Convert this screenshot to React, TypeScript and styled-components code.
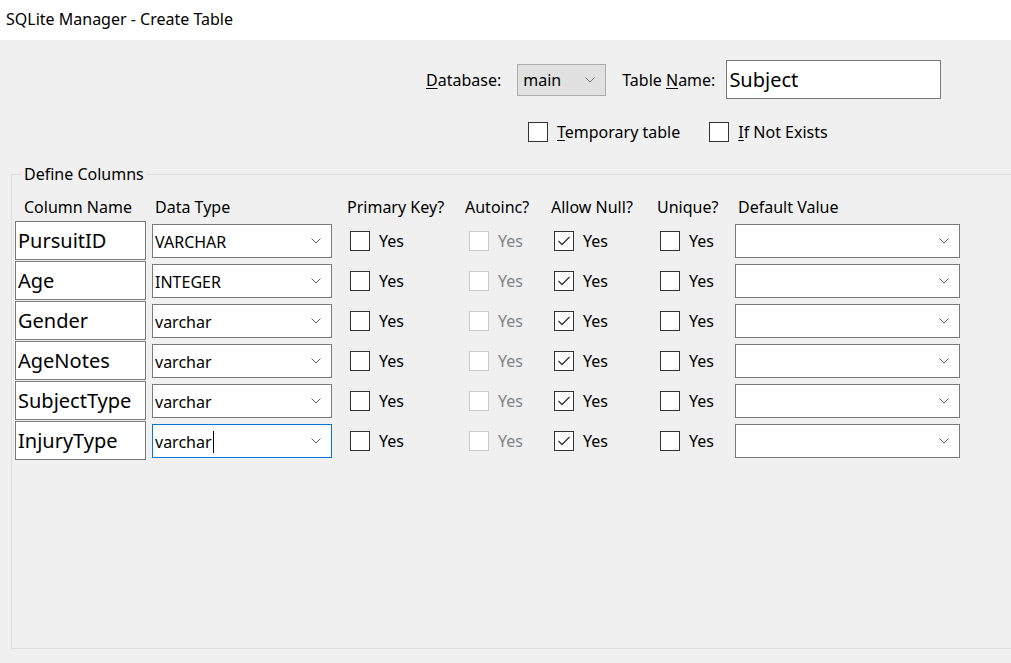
import styled, { createGlobalStyle } from "styled-components";

const GlobalStyle = createGlobalStyle`
  html, body {
    margin: 0;
    padding: 0;
    background: #f0f0f0;
  }
  body {
    font-family: "Noto Sans", "Open Sans", sans-serif;
    font-size: 16px;
    color: #000;
  }
`;

const Window = styled.div`
  width: 1011px;
  height: 663px;
  overflow: hidden;
  background: #f0f0f0;
`;

const TitleBar = styled.div`
  height: 40px;
  background: #fff;
  display: flex;
  align-items: center;
  padding-left: 6px;
  padding-bottom: 2px;
  box-sizing: border-box;
  font-size: 16px;
`;

const TopRow = styled.div`
  display: flex;
  align-items: center;
  margin-top: 20px;
  padding-left: 426px;
  height: 39px;
`;

const Label = styled.span<{ $gap?: number }>`
  white-space: nowrap;
  line-height: 20px;
  margin-left: ${(p) => p.$gap ?? 0}px;
`;

const Key = styled.span`
  text-decoration: underline;
  text-underline-offset: 2px;
`;

const Combo = styled.div<{ $w: number; $h: number; $flat?: boolean; $focus?: boolean; $gap?: number }>`
  box-sizing: border-box;
  width: ${(p) => p.$w}px;
  height: ${(p) => p.$h}px;
  margin-left: ${(p) => p.$gap ?? 0}px;
  display: flex;
  align-items: center;
  justify-content: space-between;
  padding: 0 10px 0 ${(p) => (p.$flat ? 5 : 2)}px;
  background: ${(p) => (p.$flat ? "#e1e1e1" : "#fff")};
  border: 1px solid ${(p) => (p.$focus ? "#0078d7" : p.$flat ? "#adadad" : "#7a7a7a")};
  font-size: 16px;
  white-space: nowrap;
`;

const ComboText = styled.span`
  display: flex;
  align-items: center;
  padding-top: 1px;
`;

const Caret = styled.span`
  display: inline-block;
  width: 1px;
  height: 22px;
  background: #000;
  margin-left: 1px;
`;

const TextBox = styled.div<{ $w: number; $h: number; $gap?: number }>`
  box-sizing: border-box;
  width: ${(p) => p.$w}px;
  height: ${(p) => p.$h}px;
  margin-left: ${(p) => p.$gap ?? 0}px;
  background: #fff;
  border: 1px solid #7a7a7a;
  display: flex;
  align-items: center;
  padding: 0 2px;
  font-size: 20px;
  white-space: nowrap;
`;

const OptionsRow = styled.div`
  display: flex;
  align-items: center;
  margin-top: 23px;
  padding-left: 528px;
  height: 20px;
  gap: 29px;
`;

const CheckWrap = styled.label<{ $disabled?: boolean }>`
  display: flex;
  align-items: center;
  gap: 9px;
  color: ${(p) => (p.$disabled ? "#838383" : "#000")};
  white-space: nowrap;
`;

const Box = styled.span<{ $disabled?: boolean }>`
  box-sizing: border-box;
  width: 20px;
  height: 20px;
  display: flex;
  align-items: center;
  justify-content: center;
  background: #fff;
  border: 1px solid ${(p) => (p.$disabled ? "#cccccc" : "#333")};
`;

const GroupBox = styled.fieldset`
  box-sizing: border-box;
  margin: 21px 0 0 11px;
  padding: 0 0 0 3px;
  width: 1100px;
  height: 486px;
  border: 1px solid #dcdcdc;
`;

const Legend = styled.legend`
  margin-left: 6px;
  padding: 0 3px;
  line-height: 22px;
  font-size: 16px;
`;

const Grid = styled.div`
  display: grid;
  grid-template-columns: 137px 195px 118px 86px 106px 78px 225px;
  grid-template-rows: 24px;
  grid-auto-rows: 40px;
  margin-top: 12px;
`;

const HeadCell = styled.div<{ $pad: number }>`
  padding-left: ${(p) => p.$pad}px;
  line-height: 20px;
  white-space: nowrap;
`;

const Cell = styled.div<{ $pad?: number; $top?: number }>`
  display: flex;
  align-items: ${(p) => (p.$top !== undefined ? "flex-start" : "center")};
  padding-left: ${(p) => p.$pad ?? 0}px;
  padding-top: ${(p) => p.$top ?? 0}px;
  height: 39px;
  box-sizing: border-box;
`;

const Chevron = ({ color = "#606060" }: { color?: string }) => (
  <svg width="10" height="6" viewBox="0 0 10 6">
    <polyline points="0.5,0.5 5,5 9.5,0.5" fill="none" stroke={color} strokeWidth="1" />
  </svg>
);

const CheckBox = ({
  label,
  checked,
  disabled,
}: {
  label: React.ReactNode;
  checked?: boolean;
  disabled?: boolean;
}) => (
  <CheckWrap $disabled={disabled}>
    <Box $disabled={disabled}>
      {checked && (
        <svg width="14" height="12" viewBox="0 0 14 12">
          <polyline points="1.5,6 5,9.5 12.5,2" fill="none" stroke="#333" strokeWidth="1.3" />
        </svg>
      )}
    </Box>
    {label}
  </CheckWrap>
);

const columns = [
  { name: "PursuitID", type: "VARCHAR" },
  { name: "Age", type: "INTEGER" },
  { name: "Gender", type: "varchar" },
  { name: "AgeNotes", type: "varchar" },
  { name: "SubjectType", type: "varchar" },
  { name: "InjuryType", type: "varchar", focus: true },
];

const headers: [string, number][] = [
  ["Column Name", 9],
  ["Data Type", 3],
  ["Primary Key?", 0],
  ["Autoinc?", 0],
  ["Allow Null?", 0],
  ["Unique?", 0],
  ["Default Value", 3],
];

export default function App() {
  return (
    <Window>
      <GlobalStyle />
      <TitleBar>SQLite Manager - Create Table</TitleBar>

      <TopRow>
        <Label>
          <Key>D</Key>atabase:
        </Label>
        <Combo $w={89} $h={32} $flat $gap={16}>
          <ComboText>main</ComboText>
          <Chevron color="#777" />
        </Combo>
        <Label $gap={16}>
          Table <Key>N</Key>ame:
        </Label>
        <TextBox $w={215} $h={39} $gap={11}>
          Subject
        </TextBox>
      </TopRow>

      <OptionsRow>
        <CheckBox
          label={
            <span>
              <Key>T</Key>emporary table
            </span>
          }
        />
        <CheckBox
          label={
            <span>
              <Key>I</Key>f Not Exists
            </span>
          }
        />
      </OptionsRow>

      <GroupBox>
        <Legend>Define Columns</Legend>
        <Grid>
          {headers.map(([h, pad]) => (
            <HeadCell key={h} $pad={pad}>
              {h}
            </HeadCell>
          ))}
          {columns.map((c) => [
            <Cell key={c.name + "n"}>
              <TextBox $w={131} $h={39}>
                {c.name}
              </TextBox>
            </Cell>,
            <Cell key={c.name + "t"} $top={3}>
              <Combo $w={180} $h={34} $focus={c.focus}>
                <ComboText>
                  {c.type}
                  {c.focus && <Caret />}
                </ComboText>
                <Chevron />
              </Combo>
            </Cell>,
            <Cell key={c.name + "pk"} $pad={3}>
              <CheckBox label="Yes" />
            </Cell>,
            <Cell key={c.name + "ai"} $pad={4}>
              <CheckBox label="Yes" disabled />
            </Cell>,
            <Cell key={c.name + "nl"} $pad={3}>
              <CheckBox label="Yes" checked />
            </Cell>,
            <Cell key={c.name + "uq"} $pad={3}>
              <CheckBox label="Yes" />
            </Cell>,
            <Cell key={c.name + "dv"} $top={3}>
              <Combo $w={225} $h={34}>
                <ComboText />
                <Chevron />
              </Combo>
            </Cell>,
          ])}
        </Grid>
      </GroupBox>
    </Window>
  );
}
